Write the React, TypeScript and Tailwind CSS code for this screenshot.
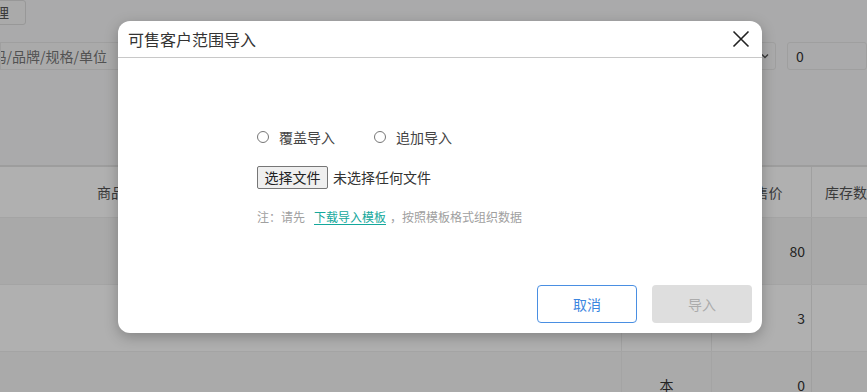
import React, { useState } from 'react';

const font = { fontFamily: '"Microsoft YaHei", "Noto Sans CJK SC", "Noto Sans", sans-serif' };

const rows = [
  { unit: '', price: '80', bg: 'bg-[#f5f5f5]' },
  { unit: '', price: '3', bg: 'bg-white' },
  { unit: '本', price: '0', bg: 'bg-[#f7f7f7]' },
];

const App: React.FC = () => {
  const [mode, setMode] = useState<string>('');

  return (
    <div className="relative w-[867px] h-[392px] overflow-hidden bg-[#f6f7f8] text-[14px] text-[#333]" style={font}>
      {/* page behind the dialog */}
      <div className="flex flex-col h-full">
        <div className="h-[25px] flex">
          <button className="ml-[-26px] w-[52px] h-[25px] shrink-0 border border-[#dcdcdc] bg-[#f7f7f7] rounded-[3px] text-[14px] text-[#555] flex items-center justify-end pr-[16px]">处理</button>
        </div>
        <div className="mt-[17px] h-[28px] flex items-center">
          <div className="w-[120px] h-[28px] shrink-0 border border-[#e6e6e6] bg-[#f7f7f7] overflow-hidden flex items-center justify-end pr-[12px]">
            <span className="whitespace-nowrap text-[#777] text-[14px]">商品名称/编码/品牌/规格/单位</span>
          </div>
          <div className="flex-1" />
          <div className="w-[40px] h-[28px] shrink-0 border border-[#e6e6e6] rounded-[3px] flex items-center justify-end pr-[6px]">
            <svg width="8" height="6" viewBox="0 0 8 6"><path d="M1 1.5 L4 4.5 L7 1.5" stroke="#555" strokeWidth="1.4" fill="none" /></svg>
          </div>
          <div className="ml-[11px] w-[80px] h-[28px] shrink-0 border border-[#e6e6e6] rounded-[3px] flex items-center pl-[8px] text-[#333]">0</div>
        </div>
        <div className="mt-[95px] border-t-[2px] border-[#e4e4e4] flex-1 flex flex-col">
          <div className="h-[50px] shrink-0 bg-white flex text-[#555]">
            <div className="w-[250px] shrink-0 flex items-center justify-center">商品名称</div>
            <div className="w-[372px] shrink-0 border-r border-[#eeeeee]" />
            <div className="w-[90px] shrink-0 border-r border-[#eeeeee] flex items-center justify-center">单位</div>
            <div className="w-[100px] shrink-0 border-r border-[#e8e8e8] flex items-center justify-center">销售价</div>
            <div className="w-[82px] shrink-0 flex items-center justify-center whitespace-nowrap">库存数量</div>
          </div>
          {rows.map((r, i) => (
            <div key={i} className={`h-[67px] shrink-0 flex border-t border-[#eeeeee] ${r.bg}`}>
              <div className="w-[250px] shrink-0" />
              <div className="w-[372px] shrink-0 border-r border-[#eeeeee]" />
              <div className="w-[90px] shrink-0 border-r border-[#eeeeee] flex items-center justify-center">{r.unit}</div>
              <div className="w-[100px] shrink-0 border-r border-[#e8e8e8] flex items-center justify-end pr-[6px]">{r.price}</div>
              <div className="w-[82px] shrink-0" />
            </div>
          ))}
        </div>
      </div>

      {/* overlay + dialog */}
      <div className="absolute inset-0 bg-[rgba(0,0,0,0.31)] pt-[21px] pl-[118px]">
        <div className="w-[644px] h-[312px] bg-white rounded-[12px] shadow-[0_4px_14px_rgba(0,0,0,0.25)] flex flex-col">
          <div className="h-[37px] shrink-0 flex items-center justify-between pl-[10px] pr-[11px] border-b border-[#c8c8c8]">
            <span className="text-[16px] text-[#333]">可售客户范围导入</span>
            <button className="w-[20px] h-[20px] flex items-center justify-center">
              <svg width="18" height="18" viewBox="0 0 18 18"><path d="M1.5 1.5 L16.5 16.5 M16.5 1.5 L1.5 16.5" stroke="#222" strokeWidth="1.6" fill="none" /></svg>
            </button>
          </div>

          <div className="flex-1 flex flex-col pl-[139px] pt-[69px]">
            <div className="h-[20px] flex items-center text-[14px] text-[#444]">
              <label className="flex items-center cursor-pointer" onClick={() => setMode('cover')}>
                <span className="w-[12px] h-[12px] rounded-full border border-[#767676] bg-white flex items-center justify-center">
                  {mode === 'cover' && <span className="w-[6px] h-[6px] rounded-full bg-[#1a73e8]" />}
                </span>
                <span className="ml-[10px]">覆盖导入</span>
              </label>
              <label className="ml-[39px] flex items-center cursor-pointer" onClick={() => setMode('append')}>
                <span className="w-[12px] h-[12px] rounded-full border border-[#767676] bg-white flex items-center justify-center">
                  {mode === 'append' && <span className="w-[6px] h-[6px] rounded-full bg-[#1a73e8]" />}
                </span>
                <span className="ml-[10px]">追加导入</span>
              </label>
            </div>

            <div className="mt-[19px] h-[23px] flex items-center text-[14px] text-[#222]">
              <span className="h-[23px] w-[71px] border border-[#767676] bg-[#efefef] rounded-[2px] flex items-center justify-center">选择文件</span>
              <span className="ml-[5px] text-[#333]">未选择任何文件</span>
            </div>

            <div className="mt-[19px] h-[17px] flex items-center text-[12px] text-[#a0a0a0] whitespace-nowrap">
              <span>注：请先</span>
              <a className="ml-[9px] text-[#14a89c] underline underline-offset-2">下载导入模板</a>
              <span className="ml-[4px]">，按照模板格式组织数据</span>
            </div>
          </div>

          <div className="flex justify-end gap-[15px] pr-[10px] pb-[10px]">
            <button className="w-[100px] h-[38px] rounded-[4px] border border-[#4a8fe2] text-[#3b86e0] text-[14px] bg-white">取消</button>
            <button className="w-[100px] h-[38px] rounded-[4px] bg-[#dedede] text-[#ababab] text-[14px]">导入</button>
          </div>
        </div>
      </div>
    </div>
  );
};

export default App;
